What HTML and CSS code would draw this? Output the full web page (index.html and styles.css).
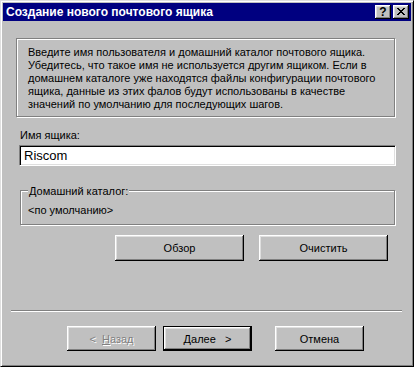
FILE: index.html
```html
<!DOCTYPE html>
<html lang="ru">
<head>
    <meta charset="UTF-8">
    <title>Создание нового почтового ящика</title>
    <link rel="stylesheet" href="styles.css">
</head>
<body>
    <div class="window">
        <div class="titlebar">
            <span class="title">Создание нового почтового ящика</span>
            <div class="title-btns">
                <span class="tbtn help">?</span>
                <span class="tbtn close">
                    <svg width="8" height="7" viewBox="0 0 8 7"><path d="M0 0h2v1h-2zM6 0h2v1h-2zM1 1h2v1h-2zM5 1h2v1h-2zM2 2h4v1h-4zM3 3h2v1h-2zM2 4h4v1h-4zM1 5h2v1h-2zM5 5h2v1h-2zM0 6h2v1h-2zM6 6h2v1h-2z" fill="#000"/></svg>
                </span>
            </div>
        </div>

        <div class="content">
            <div class="intro">
                Введите имя пользователя и домашний каталог почтового ящика.<br>
                Убедитесь, что такое имя не используется другим ящиком. Если в<br>
                домашнем каталоге уже находятся файлы конфигурации почтового<br>
                ящика, данные из этих фалов будут использованы в качестве<br>
                значений по умолчанию для последующих шагов.
            </div>

            <div class="field-label">Имя ящика:</div>
            <div class="input">Riscom</div>

            <div class="group">
                <span class="legend"><u>Д</u>омашний каталог:</span>
                <div class="group-value">&lt;по умолчанию&gt;</div>
            </div>

            <div class="actions">
                <span class="btn wide">Обзор</span>
                <span class="btn wide">Очистить</span>
            </div>
        </div>

        <div class="footer">
            <div class="separator"></div>
            <div class="nav">
                <span class="btn nav-btn disabled">&lt;&nbsp;&nbsp; <u>Н</u>азад</span>
                <span class="btn nav-btn default"><u>Д</u>алее &nbsp;&nbsp;&gt;</span>
                <span class="btn nav-btn cancel">Отмена</span>
            </div>
        </div>
    </div>
</body>
</html>
```

FILE: styles.css
```css
html, body {
    margin: 0;
    padding: 0;
    background: #c0c0c0;
    font-family: 'Liberation Sans', Arial, sans-serif;
    font-size: 11px;
    color: #000;
}

.window {
    box-sizing: border-box;
    width: 414px;
    height: 367px;
    display: flex;
    flex-direction: column;
    padding: 2px;
    border: 1px solid;
    border-color: #dfdfdf #000 #000 #dfdfdf;
    box-shadow: inset 1px 1px #fff, inset -1px -1px #808080;
    background: #c0c0c0;
}

/* Title bar */
.titlebar {
    height: 18px;
    display: flex;
    align-items: center;
    justify-content: space-between;
    padding: 0 2px 0 3px;
    background: #000080;
}

.title {
    color: #fff;
    font-weight: bold;
    font-size: 12px;
}

.title-btns {
    display: flex;
    gap: 2px;
}

.tbtn {
    box-sizing: border-box;
    width: 16px;
    height: 14px;
    display: flex;
    align-items: center;
    justify-content: center;
    background: #c0c0c0;
    box-shadow: inset -1px -1px #000, inset 1px 1px #fff, inset -2px -2px #808080, inset 2px 2px #dfdfdf;
    font-weight: bold;
    font-size: 12px;
    line-height: 1;
}

.tbtn svg {
    display: block;
    margin-top: -1px;
}

/* Body */
.content {
    padding: 17px 0 0 13px;
}

.intro {
    box-sizing: border-box;
    width: 379px;
    height: 79px;
    padding: 7px 0 0 11px;
    line-height: 13px;
    white-space: nowrap;
    border: 1px solid #808080;
    box-shadow: 1px 1px #fff, inset 1px 1px #fff;
}

.field-label {
    margin: 12px 0 0 4px;
    line-height: 13px;
}

.input {
    box-sizing: border-box;
    width: 377px;
    height: 21px;
    margin: 3px 0 0 3px;
    padding: 1px 0 0 4px;
    background: #fff;
    font-size: 13px;
    line-height: 17px;
    border: 1px solid;
    border-color: #808080 #fff #fff #808080;
    box-shadow: inset 1px 1px #000, inset -1px -1px #dfdfdf;
}

.group {
    box-sizing: border-box;
    width: 375px;
    height: 35px;
    margin: 24px 0 0 4px;
    padding: 0 0 0 7px;
    border: 1px solid #808080;
    box-shadow: 1px 1px #fff, inset 1px 1px #fff;
}

.legend {
    display: inline-block;
    margin: -6px 0 0 0;
    padding: 0 1px 0 1px;
    background: #c0c0c0;
    line-height: 13px;
    vertical-align: top;
}

.group-value {
    margin: 1px 0 0 0;
    line-height: 13px;
}

.actions {
    display: flex;
    gap: 15px;
    margin: 10px 0 0 99px;
}

/* Buttons */
.btn {
    box-sizing: border-box;
    display: flex;
    align-items: center;
    justify-content: center;
    background: #c0c0c0;
    box-shadow: inset -1px -1px #000, inset 1px 1px #fff, inset -2px -2px #808080, inset 2px 2px #dfdfdf;
    white-space: nowrap;
}

.btn.wide {
    width: 129px;
    height: 26px;
}

.btn.nav-btn {
    width: 89px;
    height: 25px;
}

.btn.default {
    border: 1px solid #000;
}

.btn.disabled {
    color: #808080;
    text-shadow: 1px 1px #fff;
}

/* Footer */
.footer {
    margin-top: auto;
    padding-bottom: 13px;
}

.separator {
    height: 0;
    margin: 0 9px 0 8px;
    border-top: 1px solid #808080;
    border-bottom: 1px solid #fff;
}

.nav {
    display: flex;
    margin: 14px 0 0 64px;
}

.nav .default {
    margin-left: 7px;
}

.nav .cancel {
    margin-left: 23px;
}
```
